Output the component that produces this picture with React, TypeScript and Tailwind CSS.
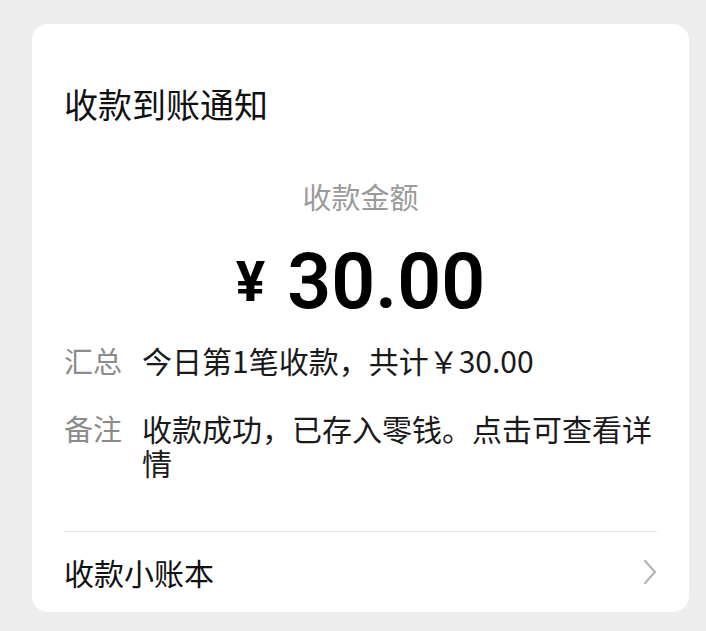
export default function App() {
  const rows = [
    { label: "汇总", value: "今日第1笔收款，共计￥30.00" },
    { label: "备注", value: "收款成功，已存入零钱。点击可查看详情" },
  ];

  return (
    <div
      className="min-h-[631px] w-[706px] bg-[#ededed] pt-[24px] pb-[19px]"
      style={{ fontFamily: '"Noto Sans CJK SC", "Noto Sans", sans-serif' }}
    >
      <div className="ml-[32px] w-[657px] rounded-[16px] bg-white px-[32px]">
        {/* Title */}
        <div className="pt-[60px] text-[34px] leading-[40px] text-[#111]">
          收款到账通知
        </div>

        {/* Amount */}
        <div className="mt-[52px] text-center text-[29px] leading-[40px] text-[#9a9a9a]">
          收款金额
        </div>
        <div className="mt-[26px] flex h-[80px] items-center justify-center text-black">
          <span
            className="mr-[22px] text-[55px] font-bold leading-none"
            style={{ fontFamily: "Roboto, sans-serif" }}
          >
            ¥
          </span>
          <span
            className="text-[77px] font-semibold leading-none"
            style={{ fontFamily: "Roboto, sans-serif" }}
          >
            30.00
          </span>
        </div>

        {/* Detail rows */}
        <div className="mt-[21px] flex flex-col gap-[34px]">
          {rows.map((r) => (
            <div key={r.label} className="flex gap-[20px] leading-[34px]">
              <div className="w-[58px] shrink-0 text-[29px] text-[#8c8c8c]">{r.label}</div>
              <div className="flex-1 text-[30px] text-[#1a1a1a]">{r.value}</div>
            </div>
          ))}
        </div>

        {/* Footer */}
        <div className="mt-[52px] h-px bg-[#e5e5e5]" />
        <div className="flex h-[80px] items-center justify-between">
          <span className="text-[30px] text-[#111]">收款小账本</span>
          <svg width="14" height="26" viewBox="0 0 14 26" fill="none">
            <path
              d="M2 2 L12 13 L2 24"
              stroke="#b5b5b5"
              strokeWidth="2.2"
              strokeLinecap="round"
              strokeLinejoin="round"
            />
          </svg>
        </div>
      </div>
    </div>
  );
}
